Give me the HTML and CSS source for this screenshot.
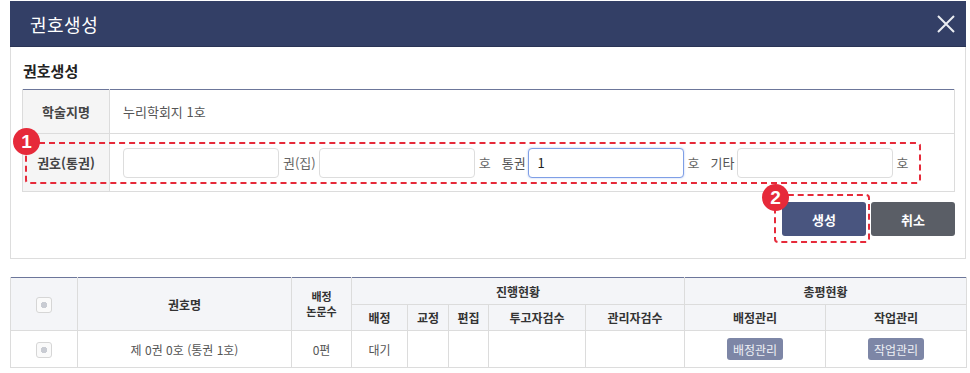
FILE: index.html
```html
<!DOCTYPE html>
<html lang="ko">
<head>
    <meta charset="UTF-8">
    <meta name="viewport" content="width=device-width, initial-scale=1.0">
    <title>권호생성</title>
    <link rel="stylesheet" href="styles.css">
</head>
<body>
    <div class="modal">
        <div class="modal-header">
            <h1>권호생성</h1>
            <button class="close-btn" aria-label="닫기">
                <svg width="20" height="20" viewBox="0 0 20 20">
                    <path d="M2 2 L18 18 M18 2 L2 18" stroke="#eceef3" stroke-width="2" fill="none"/>
                </svg>
            </button>
        </div>
        <div class="modal-body">
            <h2>권호생성</h2>
            <div class="form-wrap">
                <table class="form-table">
                    <tr class="row-title">
                        <th>학술지명</th>
                        <td>누리학회지 1호</td>
                    </tr>
                    <tr class="row-issue">
                        <th>권호(통권)</th>
                        <td>
                            <div class="issue-fields">
                                <input type="text" class="field">
                                <span class="unit">권(집)</span>
                                <input type="text" class="field">
                                <span class="unit">호</span>
                                <span class="pre">통권</span>
                                <input type="text" class="field focused" value="1">
                                <span class="unit">호</span>
                                <span class="pre">기타</span>
                                <input type="text" class="field">
                                <span class="unit">호</span>
                            </div>
                        </td>
                    </tr>
                </table>
                <div class="dash-box box-1"></div>
                <div class="badge badge-1">1</div>
            </div>
            <div class="actions">
                <div class="mark-wrap">
                    <button class="btn btn-primary">생성</button>
                    <div class="dash-box box-2"></div>
                    <div class="badge badge-2">2</div>
                </div>
                <button class="btn btn-gray">취소</button>
            </div>
        </div>
    </div>

    <table class="list-table">
        <colgroup>
            <col style="width:67px"><col style="width:214px"><col style="width:60px">
            <col style="width:56px"><col style="width:41px"><col style="width:40px">
            <col style="width:97px"><col style="width:99px"><col style="width:141px"><col style="width:141px">
        </colgroup>
        <thead>
            <tr class="head-1">
                <th rowspan="2"><span class="check"></span></th>
                <th rowspan="2">권호명</th>
                <th rowspan="2" class="two-line">배정<br>논문수</th>
                <th colspan="5">진행현황</th>
                <th colspan="2">총평현황</th>
            </tr>
            <tr class="head-2">
                <th>배정</th>
                <th>교정</th>
                <th>편집</th>
                <th>투고자검수</th>
                <th>관리자검수</th>
                <th>배정관리</th>
                <th>작업관리</th>
            </tr>
        </thead>
        <tbody>
            <tr>
                <td><span class="check"></span></td>
                <td>제 0권 0호 (통권 1호)</td>
                <td>0편</td>
                <td>대기</td>
                <td></td>
                <td></td>
                <td></td>
                <td></td>
                <td><button class="btn-small">배정관리</button></td>
                <td><button class="btn-small">작업관리</button></td>
            </tr>
        </tbody>
    </table>
</body>
</html>
```

FILE: styles.css
```css
body, html {
    margin: 0;
    padding: 0;
    background-color: #ffffff;
    font-family: "Noto Sans CJK KR", "Noto Sans", sans-serif;
    color: #333;
}
body {
    padding: 1px 4px 0 10px;
}
.modal {
    width: 956px;
    box-sizing: border-box;
}
.modal-header {
    height: 46px;
    background-color: #333f66;
    border-bottom: 1px solid #2a3455;
    display: flex;
    align-items: center;
    justify-content: space-between;
    padding: 0 10px 0 20px;
    box-sizing: border-box;
}
.modal-header h1 {
    margin: 0;
    font-size: 18px;
    font-weight: 400;
    color: #ffffff;
    letter-spacing: 0.5px;
}
.close-btn {
    background: none;
    border: none;
    padding: 0;
    width: 20px;
    height: 20px;
    cursor: pointer;
}
.modal-body {
    border: 1px solid #dddddd;
    border-top: none;
    padding: 13px 10px 22px 11px;
    height: 212px;
    box-sizing: border-box;
}
.modal-body h2 {
    margin: 0 0 7px 1px;
    font-size: 15px;
    font-weight: 700;
    line-height: 22px;
    color: #222;
}
.form-wrap {
    position: relative;
}
.form-table {
    width: 100%;
    border-collapse: collapse;
    border-top: 1px solid #6c769a;
    font-size: 13px;
}
.form-table th,
.form-table td {
    border: 1px solid #dcdcdc;
}
.form-table tr:first-child th,
.form-table tr:first-child td {
    border-top: none;
}
.form-table th {
    width: 86px;
    background-color: #f5f5f5;
    font-weight: 700;
    color: #444;
    padding: 0;
}
.form-table td {
    padding: 0 0 0 13px;
    color: #555;
}
.row-title {
    height: 44px;
}
.row-issue {
    height: 58px;
}
.issue-fields {
    display: flex;
    align-items: center;
}
.field {
    width: 156px;
    height: 30px;
    box-sizing: border-box;
    border: 1px solid #dddddd;
    border-radius: 4px;
    padding: 0 9px;
    font-family: "Noto Sans CJK KR", sans-serif;
    font-size: 13px;
    color: #222;
    outline: none;
}
.field.focused {
    border-color: #7f9fe6;
    box-shadow: 0 0 2px rgba(100, 140, 230, 0.5);
}
.unit {
    margin: 0 3px 0 4px;
    color: #666;
}
.pre {
    margin: 0 2px 0 8px;
    color: #555;
}
.dash-box {
    position: absolute;
    border: 2px dashed #e62a3a;
    border-radius: 4px;
    box-sizing: border-box;
}
.box-1 {
    left: 3px;
    top: 53px;
    width: 896px;
    height: 42px;
}
.badge {
    position: absolute;
    width: 27px;
    height: 27px;
    border-radius: 50%;
    background-color: #e62a3a;
    color: #ffffff;
    font-family: "Liberation Sans", sans-serif;
    font-size: 19px;
    font-weight: 700;
    line-height: 27px;
    text-align: center;
}
.badge-1 {
    left: -9px;
    top: 39px;
}
.actions {
    display: flex;
    justify-content: flex-end;
    gap: 5px;
    margin-top: 10px;
}
.mark-wrap {
    position: relative;
}
.btn {
    width: 84px;
    height: 34px;
    border: none;
    border-radius: 3px;
    color: #ffffff;
    font-family: "Noto Sans CJK KR", sans-serif;
    font-size: 13px;
    font-weight: 700;
    cursor: pointer;
    display: block;
}
.btn-primary {
    background-color: #49557f;
}
.btn-gray {
    background-color: #5a5e66;
}
.box-2 {
    left: -8px;
    top: -8px;
    width: 96px;
    height: 49px;
}
.badge-2 {
    left: -20px;
    top: -18px;
}
.list-table {
    margin-top: 18px;
    width: 956px;
    table-layout: fixed;
    border-collapse: collapse;
    border-top: 1px solid #6c769a;
    font-size: 12px;
    text-align: center;
}
.list-table th,
.list-table td {
    border: 1px solid #dcdcdc;
    padding: 0;
}
.list-table thead tr:first-child th {
    border-top: none;
}
.list-table th {
    background-color: #f4f5f8;
    font-weight: 700;
    color: #333;
}
.list-table td {
    color: #555;
}
.head-1 {
    height: 27px;
}
.head-2 {
    height: 26px;
}
.two-line {
    font-size: 11px;
    line-height: 15px;
}
.list-table tbody tr {
    height: 37px;
}
.check {
    display: inline-block;
    width: 14px;
    height: 14px;
    border: 1px solid #d6d6d6;
    border-radius: 3px;
    background: radial-gradient(circle, #c9ccd3 0, #c9ccd3 3px, #fafafa 3.5px);
    vertical-align: middle;
}
.btn-small {
    height: 22px;
    padding: 0 6px;
    border: none;
    border-radius: 3px;
    background-color: #7d86a6;
    color: #eef0f5;
    font-family: "Noto Sans CJK KR", sans-serif;
    font-size: 12px;
    cursor: pointer;
}
```
